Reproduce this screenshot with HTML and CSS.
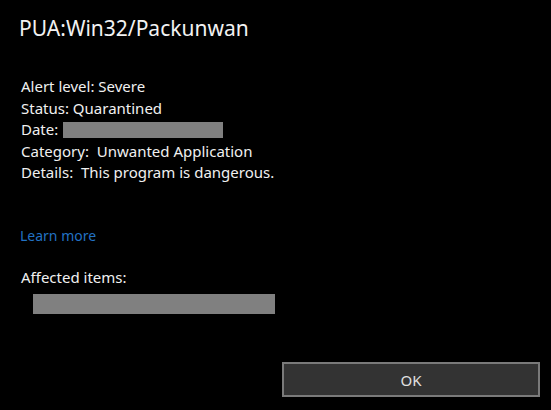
FILE: index.html
```html
<!DOCTYPE html>
<html>

<head>
    <title>PUA:Win32/Packunwan</title>
    <link rel="stylesheet" href="styles.css">
</head>

<body>
    <div class="dialog">
        <h1 class="title">PUA:Win32/Packunwan</h1>

        <div class="details">
            <div>Alert level: Severe</div>
            <div>Status: Quarantined</div>
            <div>Date: <span class="hidden date-box"></span></div>
            <div>Category:&nbsp; Unwanted Application</div>
            <div>Details:&nbsp; This program is dangerous.</div>
        </div>

        <a class="learn" href="#">Learn more</a>

        <div class="affected">Affected items:</div>
        <div class="hidden items-box"></div>

        <div class="actions">
            <button class="ok">OK</button>
        </div>
    </div>
</body>

</html>
```

FILE: styles.css
```css
body {
    margin: 0;
    padding: 0;
    background-color: #000;
    color: #fff;
    font-family: "Noto Sans", "Open Sans", sans-serif;
}

.dialog {
    display: flex;
    flex-direction: column;
    height: 410px;
    box-sizing: border-box;
    padding: 14px 11px 13px 20px;
}

.title {
    margin: 0 0 0 -1px;
    font-size: 21px;
    font-weight: normal;
    line-height: 28px;
    color: #f2f2f2;
}

.details {
    margin-top: 34px;
    padding-left: 1px;
    font-size: 15px;
    line-height: 21.5px;
    color: #f0f0f0;
}

.hidden {
    display: inline-block;
    background-color: #808080;
}

.date-box {
    width: 160px;
    height: 16px;
    margin-left: 1px;
    vertical-align: -3px;
}

.learn {
    margin-top: 42px;
    align-self: flex-start;
    font-size: 14px;
    color: #2272c4;
    text-decoration: none;
}

.affected {
    margin-top: 22px;
    padding-left: 1px;
    font-size: 15px;
    color: #f0f0f0;
}

.items-box {
    display: block;
    width: 242px;
    height: 20px;
    margin: 7px 0 0 13px;
}

.actions {
    margin-top: auto;
    display: flex;
    justify-content: flex-end;
}

.ok {
    width: 258px;
    height: 35px;
    background-color: #333;
    border: 2px solid #7a7a7a;
    color: #e0e0e0;
    font-family: "Noto Sans", "Open Sans", sans-serif;
    font-size: 15px;
    cursor: pointer;
}
```
